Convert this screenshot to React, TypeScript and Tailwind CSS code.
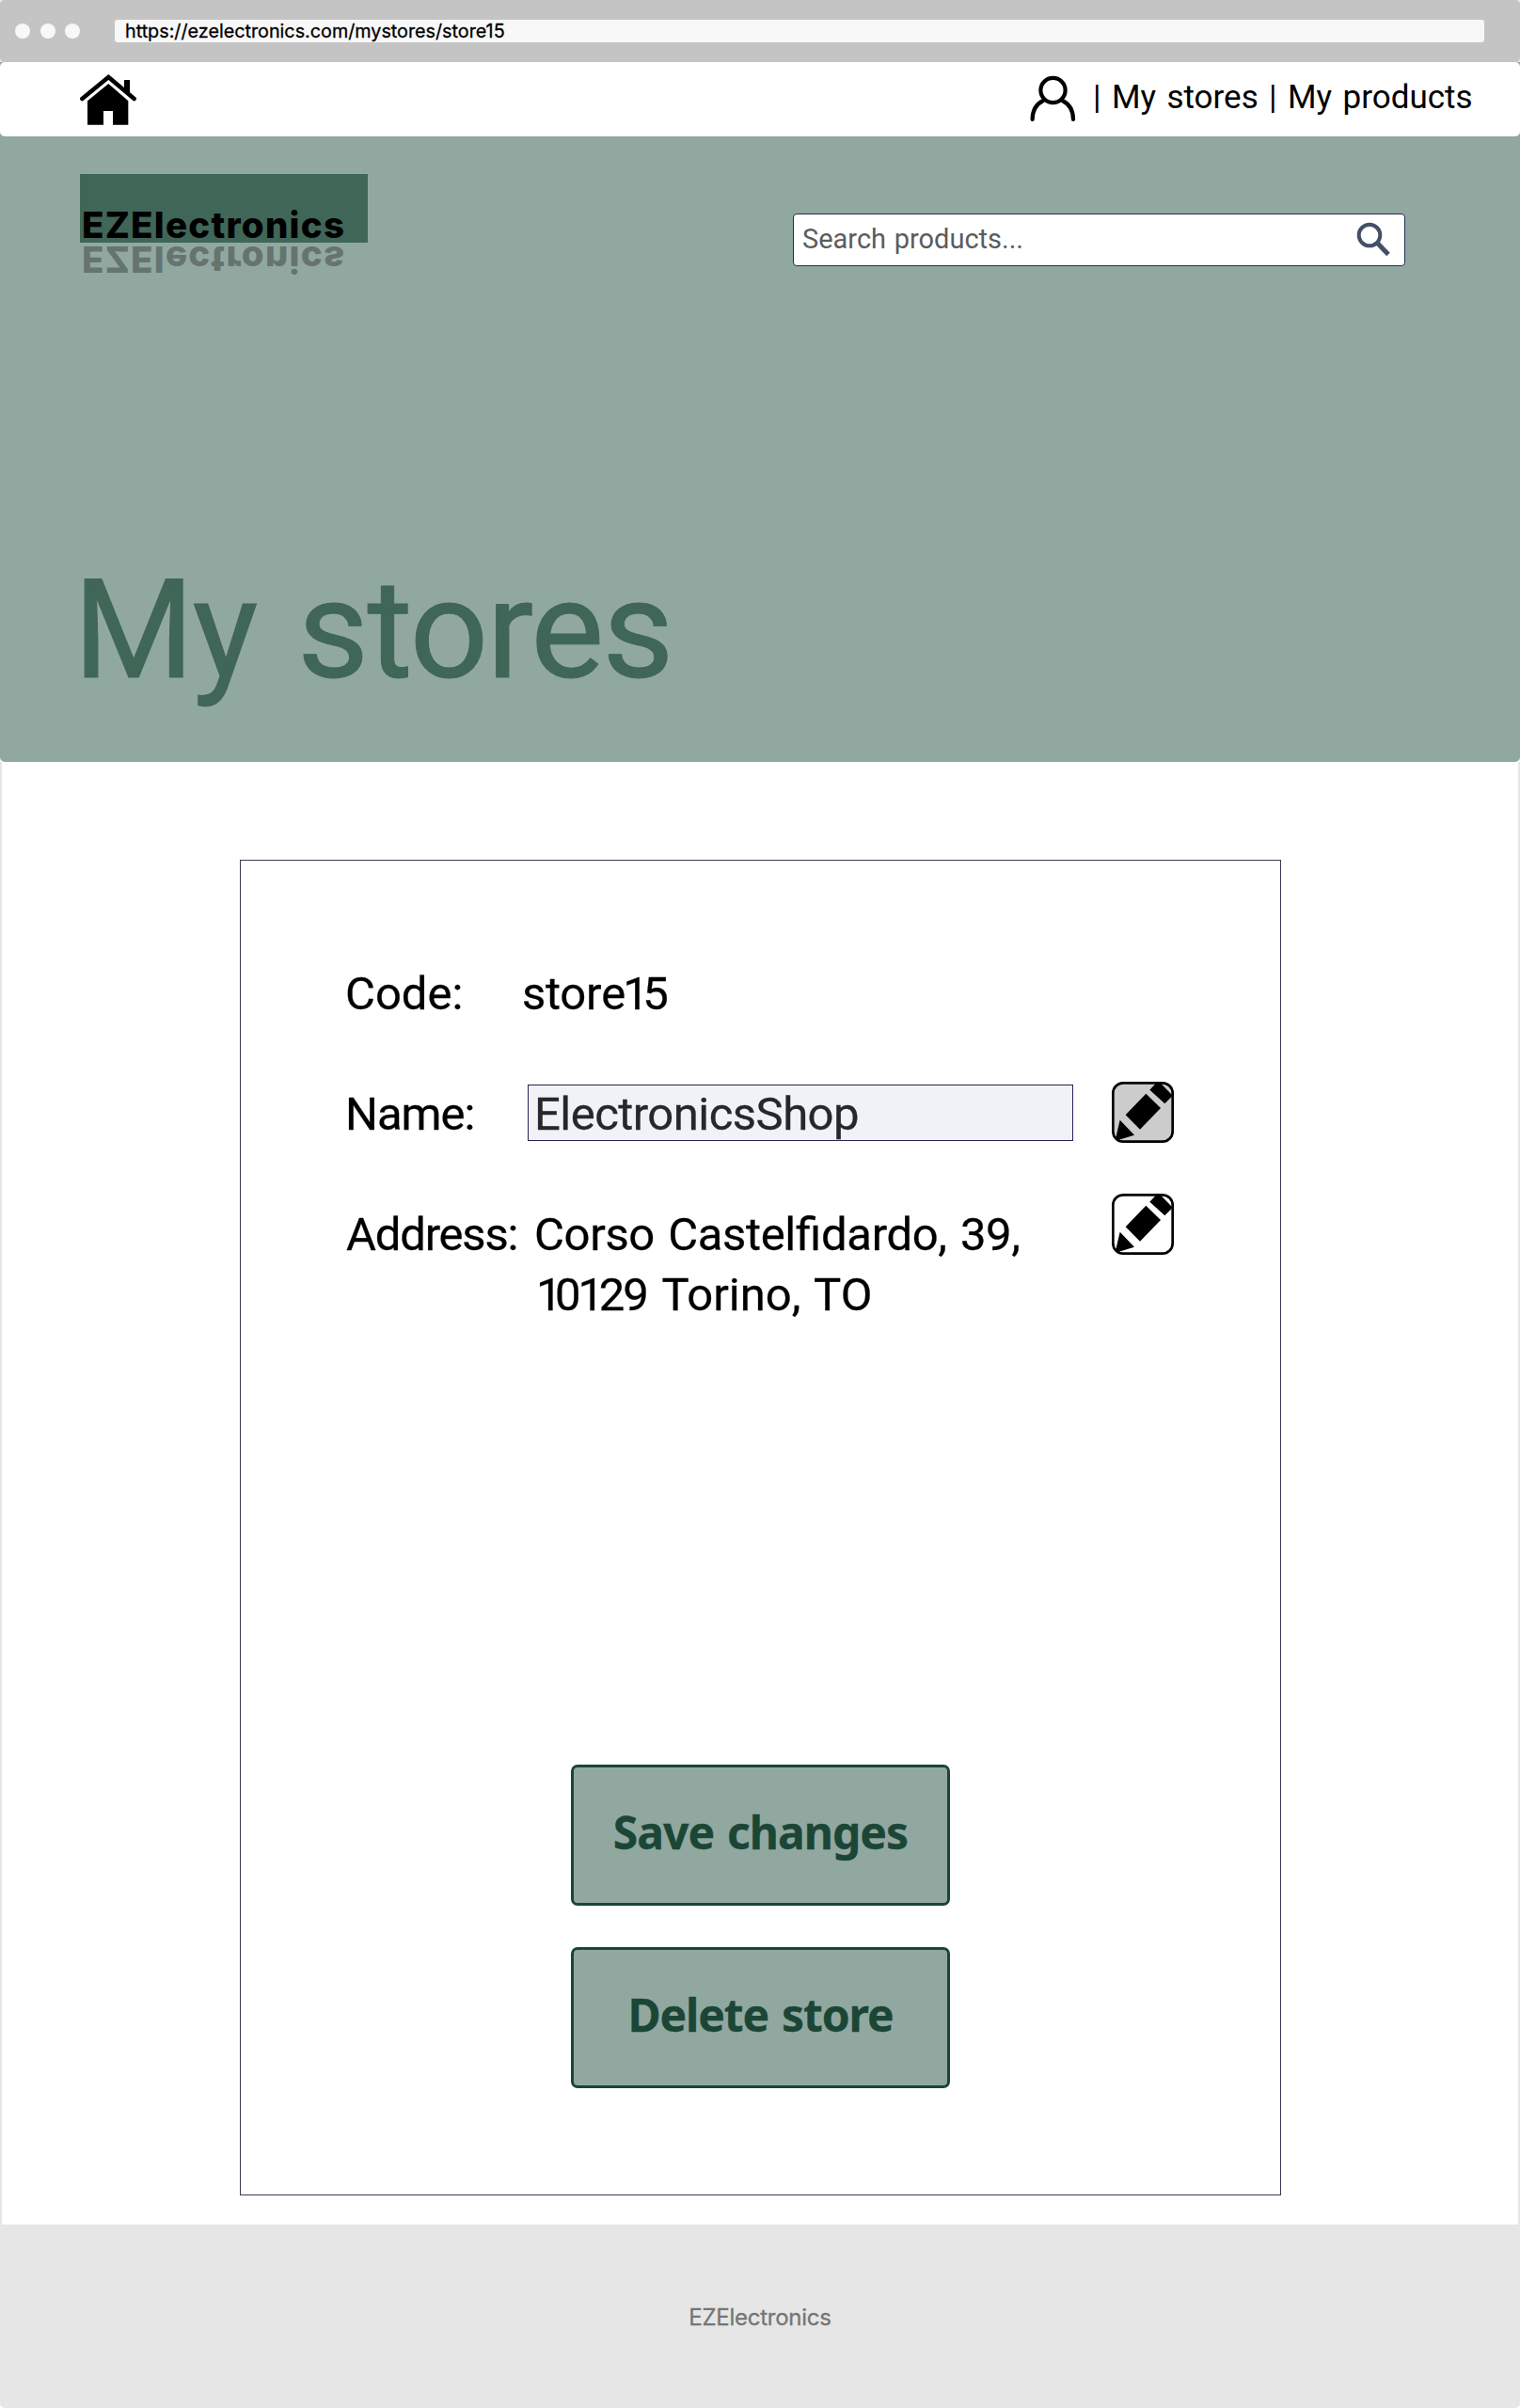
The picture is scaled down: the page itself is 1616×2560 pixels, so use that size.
import type { ReactNode } from "react";

function HomeIcon() {
  return (
    <svg className="h-[54px] w-[60px]" viewBox="27 27 180 162">
      <rect x="168" y="45" width="18" height="32" fill="#000" />
      <path d="M168 73 L186 89 V70 H168 Z" fill="#000" />
      <path
        d="M34 105 L118 36 L200 105"
        fill="none"
        stroke="#000"
        strokeWidth="13.5"
        strokeLinecap="round"
      />
      <path d="M118 57 L181 112 V188 H132 V144 H102 V188 H51 V112 Z" fill="#000" />
    </svg>
  );
}

function UserIcon() {
  return (
    <svg
      className="h-[50px] w-[50px]"
      viewBox="0 0 50 50"
      fill="none"
      stroke="#000"
      strokeWidth="4.2"
      strokeLinecap="round"
    >
      <circle cx="25.5" cy="16" r="13.1" />
      <path d="M3.6 47 C3.6 37.5 8 30.5 15 27" />
      <path d="M47 47 C47 37.5 42.6 30.5 35.6 27" />
    </svg>
  );
}

function SearchIcon() {
  return (
    <svg className="h-[37px] w-[37px]" viewBox="0 0 37 37" fill="none" stroke="#434f67">
      <circle cx="14" cy="14" r="11.3" strokeWidth="4" />
      <path d="M22 22 L34 34.5" strokeWidth="5" />
    </svg>
  );
}

function EditButton({ active = false, className }: { active?: boolean; className: string }) {
  return (
    <button aria-label="Edit" className={`shrink-0 ${className}`}>
      <svg className="block h-[65px] w-[66px]" viewBox="24 30 198 195">
        <rect
          x="28"
          y="34"
          width="190"
          height="187"
          rx="32"
          fill={active ? "#cccccc" : "#ffffff"}
          stroke="#000"
          strokeWidth="8"
        />
        <path d="M133 68 L180 114 L114 182 L68 136 Z" />
        <path d="M145 56 L166 34 L181 36 L216 72 L215 78 L193 100 Z" />
        <path d="M50 152 L96 200 L42 217 L36 212 Z" />
      </svg>
    </button>
  );
}

function ActionButton({ children, className }: { children: ReactNode; className: string }) {
  return (
    <button
      className={`h-[150px] w-[403px] rounded-[7px] border-[3px] border-[#1b4636] bg-[#91a8a1] pb-[6px] font-['Noto_Sans',sans-serif] text-[48px] leading-none font-bold text-[#1b4636] [word-spacing:2.5px] ${className}`}
    >
      {children}
    </button>
  );
}

function BrowserBar() {
  return (
    <div className="flex h-[66px] items-center rounded-[5px] bg-[#c4c4c4] pl-4">
      <div className="flex w-[106px] gap-[10.5px]">
        <span className="size-4 rounded-full bg-[#f8f8f8]" />
        <span className="size-4 rounded-full bg-[#f8f8f8]" />
        <span className="size-4 rounded-full bg-[#f8f8f8]" />
      </div>
      <div className="h-6 w-[1456px] rounded-[3px] bg-[#f8f8f8] pl-[11px] font-[Inter,sans-serif] text-[19.75px] leading-6 text-black [-webkit-text-stroke:0.3px]">
        https://ezelectronics.com/mystores/store15
      </div>
    </div>
  );
}

function Logo() {
  const text = "font-[Inter,sans-serif] text-[38.5px] leading-[38px] font-extrabold tracking-[1.25px] whitespace-nowrap";
  return (
    <div className="relative h-[73px] w-[306px] bg-[#406658]">
      <span className={`absolute top-[35px] left-[2px] text-black ${text}`}>EZElectronics</span>
      <span
        aria-hidden="true"
        className={`absolute top-[72px] left-[2px] -scale-y-100 text-[#66746f] ${text}`}
      >
        EZElectronics
      </span>
    </div>
  );
}

export default function App() {
  return (
    <div className="h-[2560px] w-[1616px] overflow-hidden bg-white font-[Roboto,sans-serif] text-black">
      <div className="bg-[#e6e6e6]">
        <BrowserBar />
      </div>
      <div className="bg-[#91a8a1]">
        <nav className="flex h-[79px] justify-between rounded-[5px] bg-white pt-[13px] pl-[85px]">
          <HomeIcon />
          <div className="flex w-[522px]">
            <div className="mt-px">
              <UserIcon />
            </div>
            <div className="ml-[18px] text-[35px] leading-[49px] whitespace-nowrap [word-spacing:2.7px]">
              | <a>My stores</a> | <a>My products</a>
            </div>
          </div>
        </nav>
      </div>
      <header className="h-[665px] rounded-b-[5px] bg-[#91a8a1] pt-10">
        <div className="flex h-[98px] items-start pl-[85px]">
          <Logo />
          <div className="mt-[42px] ml-[452px] flex h-14 w-[651px] rounded-[4px] border border-[#262b52] bg-white pl-[9px]">
            <span className="w-[589px] text-[29px] leading-[53px] text-[#5c5c5c] [word-spacing:1.4px]">
              Search products...
            </span>
            <div className="mt-2">
              <SearchIcon />
            </div>
          </div>
        </div>
        <h1 className="mt-[313.5px] pl-[78px] text-[147px] leading-[147px] tracking-[-1.7px] text-[#406658] [-webkit-text-stroke:1px] [word-spacing:9px]">
          My stores
        </h1>
      </header>
      <main className="h-[1555px] border-x-2 border-[#e6e6e6] pt-[104px] pl-[253px]">
        <section className="h-[1420px] w-[1107px] border border-[#3d3857] pt-[110px] text-[49px] leading-[64px] whitespace-nowrap [-webkit-text-stroke:0.3px] [word-spacing:2.5px]">
          <div className="flex h-16 pl-[111px]">
            <span className="w-[188px]">Code:</span>
            <p className="tracking-[-0.3px]">
              stor<span className="tracking-[-3px]">e</span>
              <span className="tracking-[-6.5px]">1</span>5
            </p>
          </div>
          <div className="mt-16 flex h-16 pl-[111px]">
            <span className="w-[194px] tracking-[-1px]">Name:</span>
            <div className="h-[60px] w-[580px] border border-[#2e1f55] bg-[#f1f2f8] pl-[6px] leading-[61px] tracking-[-0.53px] text-[#26272b]">
              ElectronicsShop
            </div>
            <EditButton active className="-mt-[3px] ml-[41px] h-[65px]" />
          </div>
          <div className="mt-16 flex h-32 pl-[112px]">
            <span className="w-[200px] tracking-[-1.2px]">Address:</span>
            <div className="w-[614px]">
              <p className="tracking-[-0.35px]">
                Corso Castel<span className="tracking-normal">fi</span>dardo, 39,
              </p>
              <p className="pl-0.5">
                <span className="tracking-[-7.5px]">1</span>
                <span className="tracking-[-3px]">0</span>
                <span className="tracking-[-5.5px]">1</span>
                <span className="tracking-[-2px]">2</span>9 Torino, TO
              </p>
            </div>
            <EditButton className="-mt-[12px] h-[65px]" />
          </div>
          <div className="mt-[467px] flex flex-col items-center gap-11">
            <ActionButton className="tracking-[-1px]">Save changes</ActionButton>
            <ActionButton className="tracking-[-1.1px]">Delete store</ActionButton>
          </div>
        </section>
      </main>
      <footer className="flex h-[195px] items-center justify-center rounded-b-[5px] bg-[#e6e6e6] pt-0.5 font-[Inter,sans-serif] text-2xl tracking-[-0.25px] text-[#757575] [-webkit-text-stroke:0.3px]">
        EZElectronics
      </footer>
    </div>
  );
}
